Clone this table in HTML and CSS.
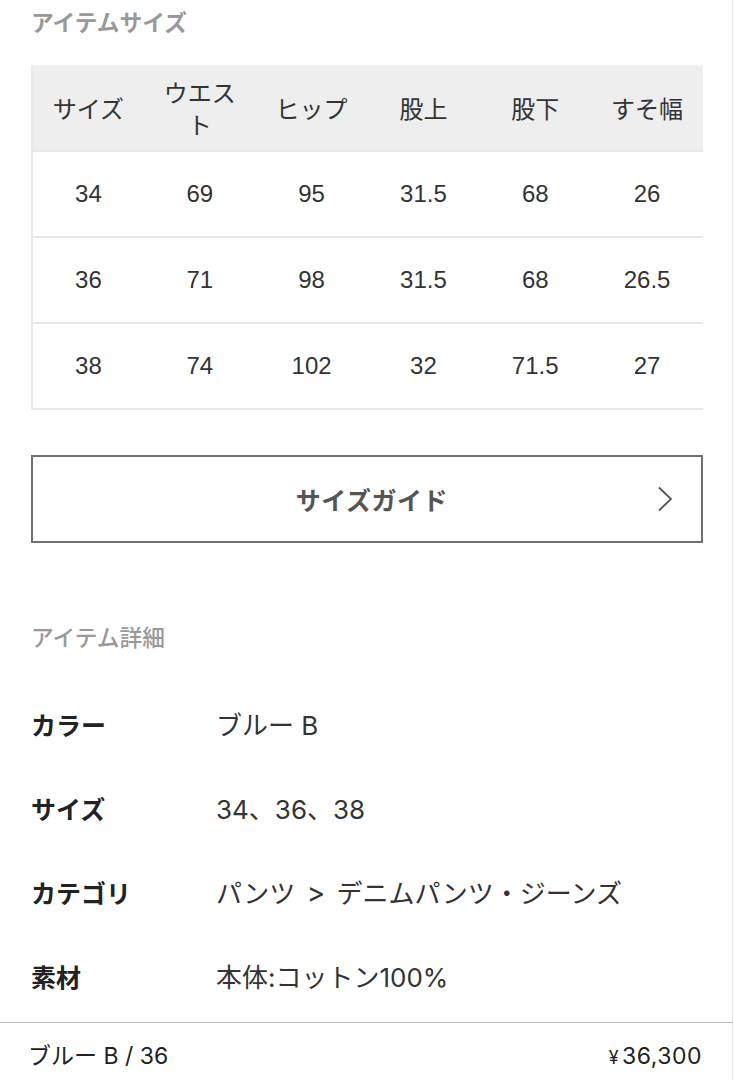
FILE: index.html
```html
<!DOCTYPE html>
<html lang="ja">
<head>
<meta charset="utf-8">
<link rel="stylesheet" href="styles.css">
</head>
<body>
<div class="page">
  <div class="content">
    <h2 class="sec-title">アイテムサイズ</h2>
    <table class="size-table">
      <thead>
        <tr><th>サイズ</th><th>ウエスト</th><th>ヒップ</th><th>股上</th><th>股下</th><th>すそ幅</th></tr>
      </thead>
      <tbody>
        <tr><td>34</td><td>69</td><td>95</td><td>31.5</td><td>68</td><td>26</td></tr>
        <tr><td>36</td><td>71</td><td>98</td><td>31.5</td><td>68</td><td>26.5</td></tr>
        <tr><td>38</td><td>74</td><td>102</td><td>32</td><td>71.5</td><td>27</td></tr>
      </tbody>
    </table>
    <div class="guide-btn">
      <span class="guide-label">サイズガイド</span>
      <svg class="chev" width="16" height="26" viewBox="0 0 16 26"><path d="M2 1.5 L14 13 L2 24.5" fill="none" stroke="#555" stroke-width="1.8"/></svg>
    </div>
    <h2 class="sec-title sec-title2">アイテム詳細</h2>
    <dl class="details">
      <div class="drow"><dt>カラー</dt><dd>ブルー B</dd></div>
      <div class="drow"><dt>サイズ</dt><dd>34、36、38</dd></div>
      <div class="drow"><dt>カテゴリ</dt><dd>パンツ <span class="gt">&gt;</span> デニムパンツ・ジーンズ</dd></div>
      <div class="drow"><dt>素材</dt><dd>本体:コットン100%</dd></div>
    </dl>
  </div>
  <div class="bottom-bar">
    <span class="variant">ブルー B / 36</span>
    <span class="price"><span class="yen">¥</span>36,300</span>
  </div>
</div>
</body>
</html>
```

FILE: styles.css
```css
* { box-sizing: border-box; }
html, body { margin: 0; padding: 0; background: #fff; }
body {
  font-family: "Noto Sans CJK JP", "Noto Sans", sans-serif;
  color: #333;
  overflow: hidden;
}
.page {
  width: 733px;
  height: 1080px;
  border-right: 1px solid #e6e6e6;
  display: flex;
  flex-direction: column;
}
.content {
  padding: 6px 29px 0 31px;
  flex: 1;
}
.sec-title {
  margin: 0;
  font-size: 22.7px;
  line-height: 32px;
  font-weight: 700;
  color: #999;
}
.sec-title2 {
  margin-top: 78px;
  font-weight: 500;
}
.size-table {
  margin-top: 27px;
  width: 672px;
  border-collapse: collapse;
  table-layout: fixed;
  border-left: 2px solid #e8e8e8;
  border-bottom: 2px solid #e8e8e8;
}
.size-table th {
  background: #eeeeee;
  height: 85px;
  font-weight: 400;
  font-size: 24px;
  line-height: 32px;
  color: #333;
  padding: 0 10px;
  text-align: center;
}
.size-table td {
  height: 86px;
  font-family: "Liberation Sans", "Noto Sans CJK JP", sans-serif;
  font-size: 24px;
  color: #333;
  text-align: center;
  padding: 0;
  border-top: 2px solid #e8e8e8;
}
.size-table thead th { border-top: 1px solid #f2f2f2; }
.guide-btn {
  margin-top: 45px;
  height: 88px;
  border: 2px solid #707070;
  display: flex;
  align-items: center;
  justify-content: center;
  position: relative;
}
.guide-label {
  font-size: 25px;
  font-weight: 700;
  color: #555;
  letter-spacing: 0.5px;
  margin-left: 10px;
}
.chev {
  position: absolute;
  right: 28px;
  top: 29px;
}
.details { margin: 29px 0 0 0; }
.drow {
  display: flex;
  align-items: center;
  height: 84px;
}
.drow dt {
  width: 185px;
  font-size: 25px;
  font-weight: 700;
  color: #222;
}
.drow dd {
  margin: 0;
  font-family: "Inter", "Noto Sans CJK JP", sans-serif;
  font-size: 26px;
  color: #333;
}
.gt { margin: 0 4px; font-size: 28px; font-weight: 400; }
.bottom-bar {
  border-top: 1px solid #bbb;
  height: 58px;
  padding: 17px 31px 0 28px;
  display: flex;
  justify-content: space-between;
  font-family: "Inter", "Noto Sans CJK JP", sans-serif;
  font-size: 23px;
  line-height: 32px;
  color: #222;
  margin-right: -1px;
}
.price { letter-spacing: 0.5px; }
.yen { font-size: 18px; margin-right: 3px; }
```
